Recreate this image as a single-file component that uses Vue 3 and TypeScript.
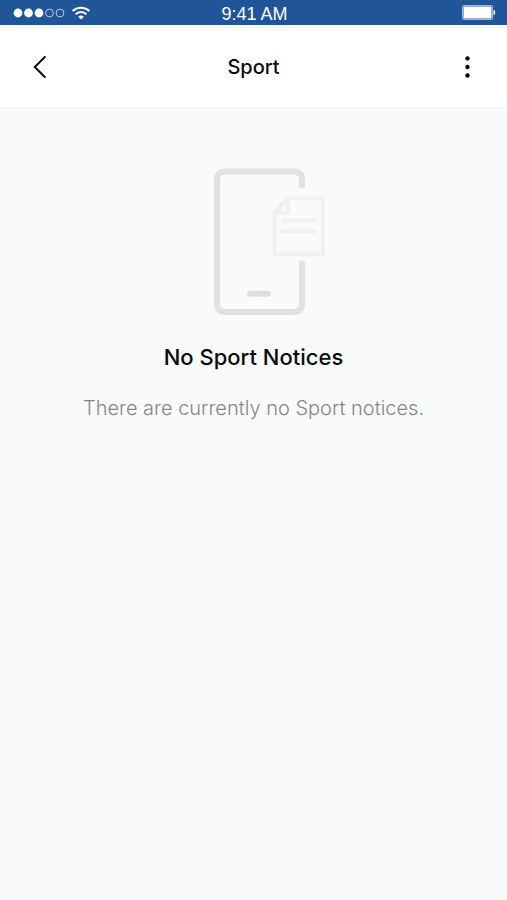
<script setup lang="ts">
const category: string = 'Sport'
const time: string = '9:41 AM'
const signalStrength: number = 3
</script>

<template>
  <div class="screen">
    <div class="status-bar">
      <div class="status-left">
        <svg class="signal" width="52" height="10" viewBox="0 0 52 10" aria-hidden="true">
          <circle
            v-for="n in 5"
            :key="n"
            :cx="n * 10.5 - 5.5"
            cy="5"
            :r="n <= signalStrength ? 4.4 : 3.9"
            :class="n <= signalStrength ? 'dot-full' : 'dot-empty'"
          />
        </svg>
        <svg class="wifi" width="20" height="14" viewBox="0 0 20 14" aria-hidden="true">
          <path d="M1.7 5.1a11.8 11.8 0 0 1 16.6 0" />
          <path d="M4.7 8.2a7.5 7.5 0 0 1 10.6 0" />
          <path class="wifi-base" d="M7.2 10.8a4 4 0 0 1 5.6 0L10 13.6z" />
        </svg>
      </div>
      <span class="time">{{ time }}</span>
      <svg class="battery" width="34" height="15" viewBox="0 0 34 15" aria-hidden="true">
        <rect class="battery-case" x="0.5" y="0.5" width="30" height="14" rx="1.5" />
        <rect class="battery-level" x="1.5" y="1.5" width="28" height="12" rx="0.5" />
        <path class="battery-level" d="M31.5 4.7c2.3 0.7 2.3 4.9 0 5.6z" />
      </svg>
    </div>

    <header class="nav">
      <button class="nav-button" type="button" aria-label="Back">
        <svg width="24" height="24" viewBox="0 0 24 24" aria-hidden="true">
          <path class="chevron" d="M17.4 1.4L6.8 12l10.6 10.6" />
        </svg>
      </button>
      <h1 class="nav-title">{{ category }}</h1>
      <button class="nav-button" type="button" aria-label="More options">
        <svg width="24" height="24" viewBox="0 0 24 24" aria-hidden="true">
          <circle cx="12.500" cy="3.4" r="2.200" />
          <circle cx="12.500" cy="12" r="2.200" />
          <circle cx="12.500" cy="20.500" r="2.200" />
        </svg>
      </button>
    </header>

    <main class="empty">
      <svg class="illustration" width="114" height="148" viewBox="0 0 114 148" aria-hidden="true">
        <path
          class="phone"
          d="M89 19V12Q89 3.500 80.500 3.500H12.500Q4 3.500 4 12V135.500Q4 144 12.500 144H80.500Q89 144 89 135.500V94.500"
        />
        <path class="phone-ends" d="M86 18.500h6v1q-3 1.500-6 0zM86 95v-1.500q3-1.500 6 0V95z" />
        <path class="home" d="M37 125.800H55" />
        <path class="page" d="M75 30H110V86.500H61.500V44.500Z" />
        <path class="page" d="M75 30V44.500H61.500" />
        <path class="page-line" d="M70 52.500H102M70 63.200H102" />
      </svg>
      <h2 class="empty-title">No {{ category }} Notices</h2>
      <p class="empty-text">There are currently no {{ category }} notices.</p>
    </main>
  </div>
</template>

<style>
body {
  margin: 0;
  background: #f9fafc;
}
</style>

<style scoped>
.screen {
  display: flex;
  flex-direction: column;
  min-height: 100vh;
  background: #f9fafc;
  color: #0b0b0c;
  font-family: Inter, "Liberation Sans", sans-serif;
}

.status-bar {
  display: grid;
  grid-template-columns: 1fr auto 1fr;
  align-items: center;
  height: 25px;
  padding: 0 11px 0 13px;
  background: #20559a;
  color: #fff;
}

.status-left {
  display: flex;
  align-items: center;
  gap: 6px;
}

.signal,
.wifi,
.battery {
  display: block;
}

.dot-full {
  fill: #fff;
}

.dot-empty {
  fill: none;
  stroke: #b5cbe6;
  stroke-width: 1;
}

.wifi path {
  fill: none;
  stroke: #fff;
  stroke-width: 2.1;
}

.wifi .wifi-base {
  fill: #fff;
  stroke: none;
}

.time {
  padding-top: 2px;
  font-family: "Liberation Sans", sans-serif;
  font-size: 18px;
  line-height: 22px;
}

.battery {
  justify-self: end;
}

.battery-case {
  fill: none;
  stroke: #9fbce0;
}

.battery-level {
  fill: #fff;
}

.nav {
  display: flex;
  align-items: center;
  justify-content: space-between;
  padding: 26px 24px 24px;
  background: #fff;
  border-bottom: 2px solid #f5f6f7;
}

.nav-button {
  display: flex;
  align-items: center;
  justify-content: center;
  width: 32px;
  height: 32px;
  padding: 0;
  border: 0;
  background: none;
  color: #050505;
  fill: currentColor;
}

.chevron {
  fill: none;
  stroke: currentColor;
  stroke-width: 2;
}

.nav-title {
  margin: 0;
  font-size: 20px;
  font-weight: 500;
  line-height: 24px;
}

.empty {
  display: flex;
  flex-direction: column;
  align-items: center;
  padding: 59px 24px 24px;
  text-align: center;
}

.illustration {
  display: block;
  margin-left: 33px;
}

.phone {
  fill: none;
  stroke: #e0e1e3;
  stroke-width: 6;
}

.phone-ends {
  fill: #e0e1e3;
}

.home {
  fill: none;
  stroke: #dedfe1;
  stroke-width: 6;
  stroke-linecap: round;
}

.page,
.page-line {
  fill: none;
  stroke: #eff0f2;
  stroke-width: 4;
  stroke-linejoin: round;
}

.page-line {
  stroke-linecap: round;
}

.empty-title {
  margin: 27px 0 0;
  font-size: 22px;
  font-weight: 500;
  line-height: 28px;
}

.empty-text {
  margin: 25px 0 0;
  color: #85868a;
  font-size: 20px;
  font-weight: 300;
  line-height: 24px;
}
</style>
